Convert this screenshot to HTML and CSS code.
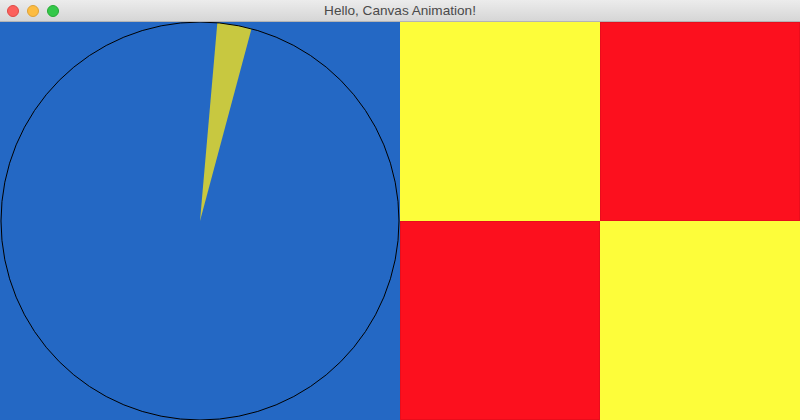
FILE: index.html
```html
<!DOCTYPE html>
<html>
<head>
<meta charset="utf-8">
<link rel="stylesheet" href="styles.css">
</head>
<body>
<div class="window">
  <div class="titlebar">
    <div class="lights">
      <span class="light red"></span>
      <span class="light yellow"></span>
      <span class="light green"></span>
    </div>
    <div class="title">Hello, Canvas Animation!</div>
  </div>
  <div class="content">
    <div class="pie-panel">
      <svg class="pie" viewBox="0 0 400 398" width="400" height="398">
        <rect x="0" y="0" width="400" height="398" fill="#2468c4"/>
        <path d="M200 199 L217.34 0.76 A199 199 0 0 1 251.5 6.78 Z" fill="#c8c840"/>
        <circle cx="200" cy="199" r="199" fill="none" stroke="#000" stroke-width="1"/>
      </svg>
    </div>
    <div class="checker">
      <div class="cell c-yellow"></div>
      <div class="cell c-red"></div>
      <div class="cell c-red"></div>
      <div class="cell c-yellow"></div>
    </div>
  </div>
</div>
</body>
</html>
```

FILE: styles.css
```css
html, body {
  margin: 0;
  padding: 0;
  width: 800px;
  height: 420px;
  overflow: hidden;
  background: #fff;
}
.window {
  display: flex;
  flex-direction: column;
  width: 800px;
  height: 420px;
}
.titlebar {
  position: relative;
  height: 22px;
  box-sizing: border-box;
  background: linear-gradient(#ececec, #d6d6d6);
  border-bottom: 1px solid #b4b4b4;
  display: flex;
  align-items: center;
  justify-content: center;
  flex: none;
}
.lights {
  position: absolute;
  left: 7px;
  top: 5px;
  display: flex;
  gap: 8px;
}
.light {
  width: 12px;
  height: 12px;
  border-radius: 50%;
  box-sizing: border-box;
}
.light.red { background: #fc605c; border: 0.5px solid #de4a45; }
.light.yellow { background: #fdbc40; border: 0.5px solid #dea236; }
.light.green { background: #34c84a; border: 0.5px solid #27aa35; }
.title {
  font-family: "Liberation Sans", Arial, sans-serif;
  font-size: 13.6px;
  color: #4a4a4a;
  line-height: 21px;
}
.content {
  display: flex;
  flex: 1;
  height: 398px;
}
.pie-panel {
  width: 400px;
  height: 398px;
  flex: none;
  background: #2468c4;
}
.pie {
  display: block;
}
.checker {
  width: 400px;
  height: 398px;
  display: grid;
  grid-template-columns: 200px 200px;
  grid-template-rows: 199px 199px;
}
.c-yellow { background: #fdfd3a; }
.c-red { background: #fc101e; box-shadow: inset 0 0 0 1px #e80e1c; }
```
